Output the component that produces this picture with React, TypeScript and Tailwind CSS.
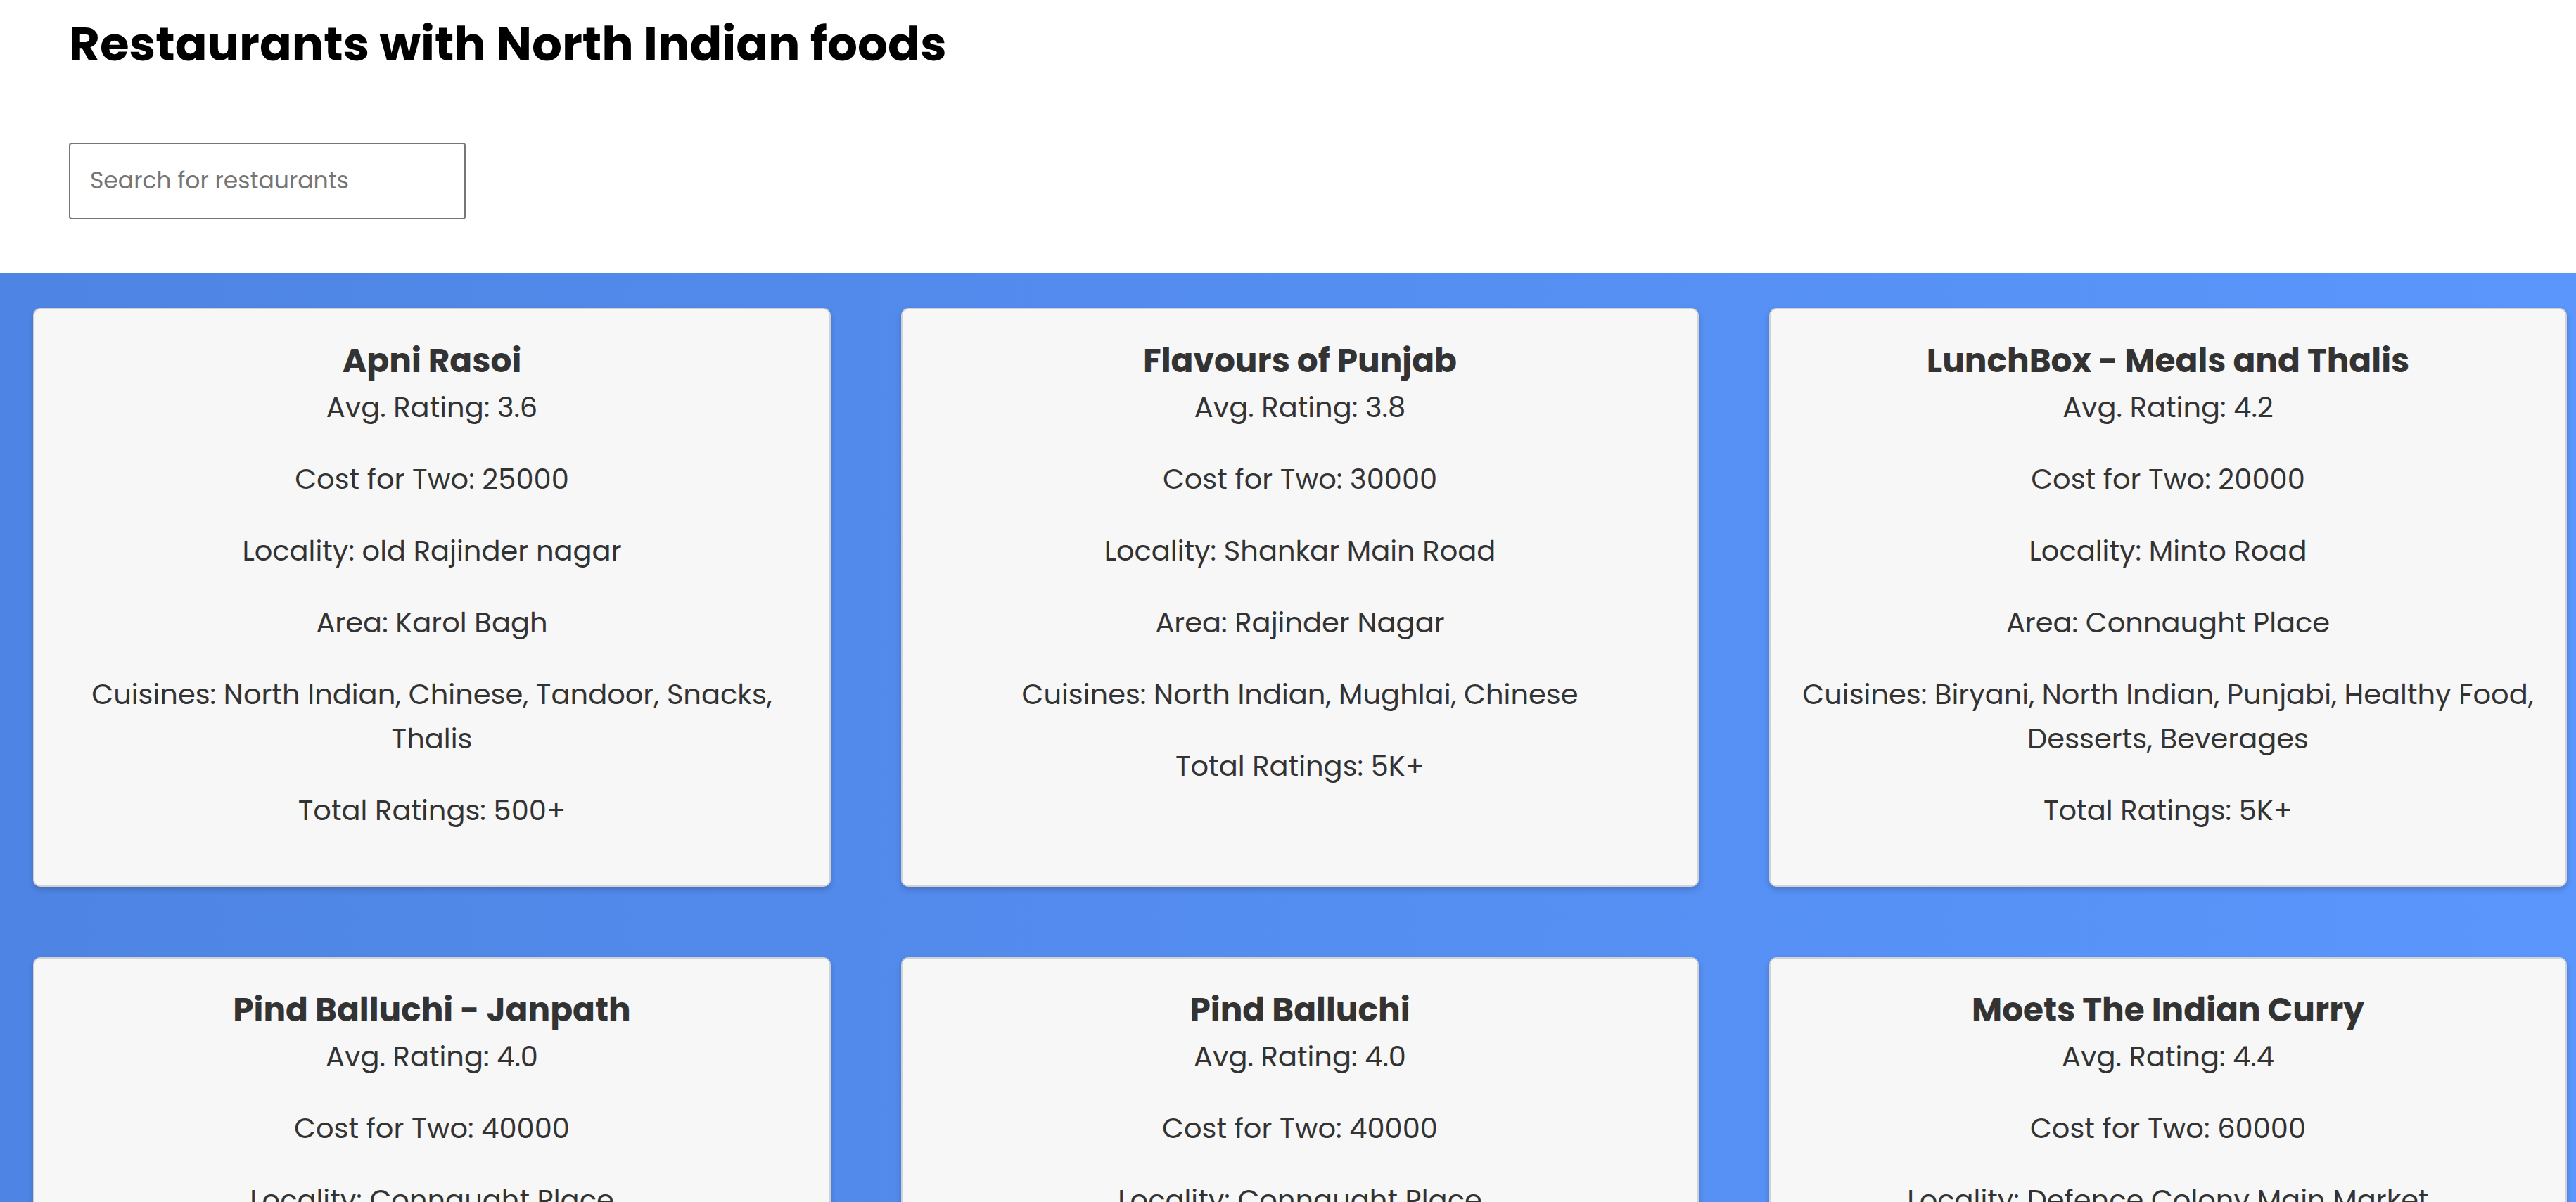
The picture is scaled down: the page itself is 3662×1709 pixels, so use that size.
const restaurants = [
  {
    name: "Apni Rasoi",
    rating: "3.6",
    cost: 25000,
    locality: "old Rajinder nagar",
    area: "Karol Bagh",
    cuisines: "North Indian, Chinese, Tandoor, Snacks, Thalis",
    total: "500+",
  },
  {
    name: "Flavours of Punjab",
    rating: "3.8",
    cost: 30000,
    locality: "Shankar Main Road",
    area: "Rajinder Nagar",
    cuisines: "North Indian, Mughlai, Chinese",
    total: "5K+",
  },
  {
    name: "LunchBox - Meals and Thalis",
    rating: "4.2",
    cost: 20000,
    locality: "Minto Road",
    area: "Connaught Place",
    cuisines: "Biryani, North Indian, Punjabi, Healthy Food, Desserts, Beverages",
    total: "5K+",
  },
  {
    name: "Pind Balluchi - Janpath",
    rating: "4.0",
    cost: 40000,
    locality: "Connaught Place",
    area: "Connaught Place",
    cuisines: "North Indian, Mughlai, Tandoor",
    total: "1K+",
  },
  {
    name: "Pind Balluchi",
    rating: "4.0",
    cost: 40000,
    locality: "Connaught Place",
    area: "Connaught Place",
    cuisines: "North Indian, Mughlai",
    total: "1K+",
  },
  {
    name: "Moets The Indian Curry",
    rating: "4.4",
    cost: 60000,
    locality: "Defence Colony Main Market",
    area: "Defence Colony",
    cuisines: "North Indian, Mughlai, Chinese",
    total: "1K+",
  },
];

type Restaurant = (typeof restaurants)[number];

function RestaurantCard({ r }: { r: Restaurant }) {
  return (
    <div className="bg-[#f7f7f7] border-2 border-[#d2d2d2] rounded-[10px] shadow-[0_4px_8px_rgba(0,0,0,0.18)] px-[42px] pt-[38px] pb-[36px] text-center text-[#333333]">
      <h3 className="text-[47px] font-bold leading-[70px]">{r.name}</h3>
      <p className="text-[40px] leading-[63px] mb-[39px]">Avg. Rating: {r.rating}</p>
      <p className="text-[40px] leading-[63px] mb-[39px]">Cost for Two: {r.cost}</p>
      <p className="text-[40px] leading-[63px] mb-[39px]">Locality: {r.locality}</p>
      <p className="text-[40px] leading-[63px] mb-[39px]">Area: {r.area}</p>
      <p className="text-[40px] leading-[63px] mb-[39px]">Cuisines: {r.cuisines}</p>
      <p className="text-[40px] leading-[63px] mb-[39px]">Total Ratings: {r.total}</p>
    </div>
  );
}

export default function App() {
  return (
    <div className="font-['Poppins','Open_Sans',sans-serif] bg-white min-h-screen">
      <div className="px-[98px] pt-[29px] pb-[76px]">
        <h1 className="text-[67.5px] font-bold leading-none text-black">
          Restaurants with North Indian foods
        </h1>
        <input
          type="text"
          placeholder="Search for restaurants"
          className="mt-[106px] w-[564px] h-[109px] border-2 border-[#767676] rounded-[4px] pl-[28px] text-[33px] placeholder:text-[#757575] outline-none"
        />
      </div>
      <div className="bg-linear-to-r from-[#4e85e4] to-[#5a96fc] pt-[50px] pb-[100px] pl-[47px]">
        <div className="grid grid-cols-[repeat(3,1134px)] gap-x-[100px] gap-y-[100px]">
          {restaurants.map((r) => (
            <RestaurantCard key={r.name} r={r} />
          ))}
        </div>
      </div>
    </div>
  );
}
